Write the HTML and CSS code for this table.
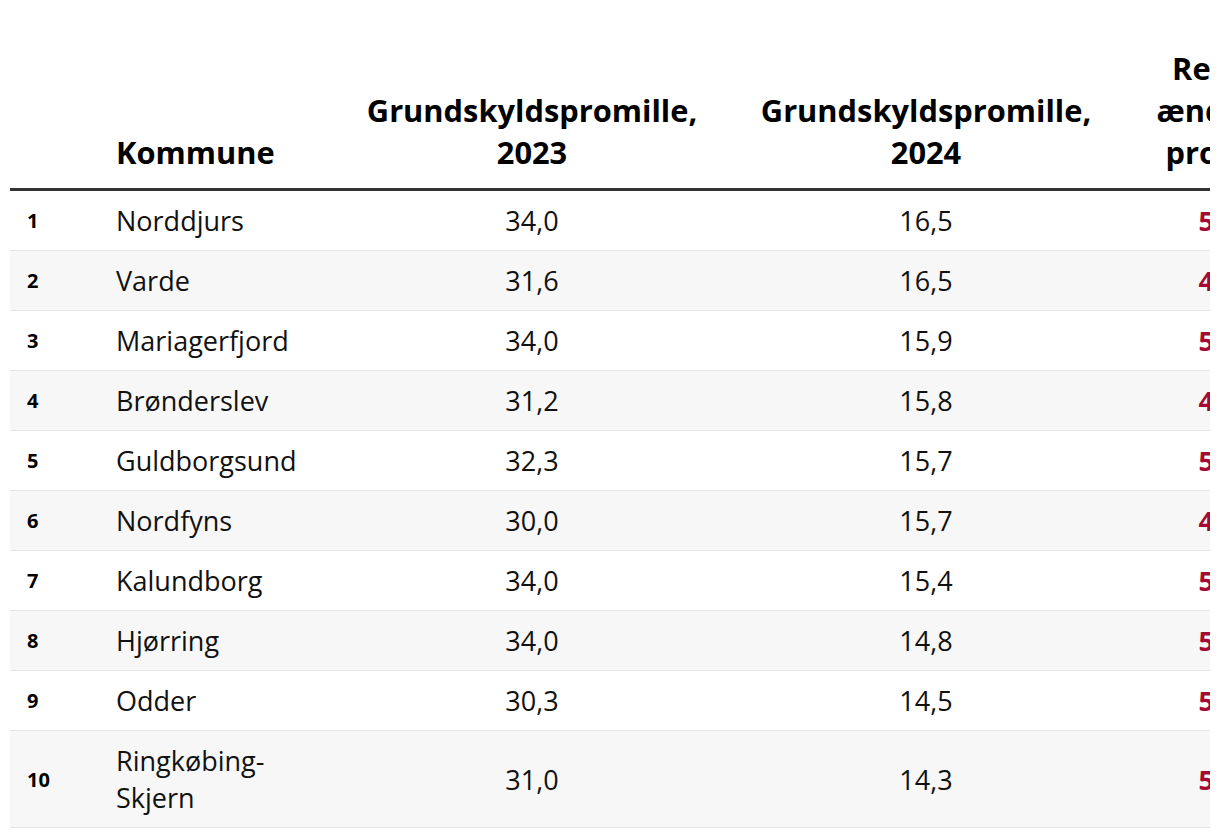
FILE: index.html
```html
<!DOCTYPE html>
<html lang="da">
<head>
<meta charset="utf-8">
<title>Grundskyldspromille</title>
<link rel="stylesheet" href="styles.css">
</head>
<body>
<div class="wrap">
  <table class="tbl">
    <colgroup>
      <col class="c-rank">
      <col class="c-name">
      <col class="c-num">
      <col class="c-num">
      <col class="c-rel">
    </colgroup>
    <thead>
      <tr>
        <th class="rank"></th>
        <th class="name">Kommune</th>
        <th class="num">Grundskyldspromille,<br>2023</th>
        <th class="num">Grundskyldspromille,<br>2024</th>
        <th class="num rel">Relativ<br>ændring,<br>procent</th>
      </tr>
    </thead>
    <tbody>
      <tr><td class="rank">1</td><td class="name">Norddjurs</td><td class="num">34,0</td><td class="num">16,5</td><td class="num red">51,5</td></tr>
      <tr><td class="rank">2</td><td class="name">Varde</td><td class="num">31,6</td><td class="num">16,5</td><td class="num red">47,8</td></tr>
      <tr><td class="rank">3</td><td class="name">Mariagerfjord</td><td class="num">34,0</td><td class="num">15,9</td><td class="num red">53,2</td></tr>
      <tr><td class="rank">4</td><td class="name">Brønderslev</td><td class="num">31,2</td><td class="num">15,8</td><td class="num red">49,4</td></tr>
      <tr><td class="rank">5</td><td class="name">Guldborgsund</td><td class="num">32,3</td><td class="num">15,7</td><td class="num red">51,4</td></tr>
      <tr><td class="rank">6</td><td class="name">Nordfyns</td><td class="num">30,0</td><td class="num">15,7</td><td class="num red">47,7</td></tr>
      <tr><td class="rank">7</td><td class="name">Kalundborg</td><td class="num">34,0</td><td class="num">15,4</td><td class="num red">54,7</td></tr>
      <tr><td class="rank">8</td><td class="name">Hjørring</td><td class="num">34,0</td><td class="num">14,8</td><td class="num red">56,5</td></tr>
      <tr><td class="rank">9</td><td class="name">Odder</td><td class="num">30,3</td><td class="num">14,5</td><td class="num red">52,1</td></tr>
      <tr><td class="rank">10</td><td class="name">Ringkøbing-<br>Skjern</td><td class="num">31,0</td><td class="num">14,3</td><td class="num red">53,9</td></tr>
    </tbody>
  </table>
</div>
</body>
</html>
```

FILE: styles.css
```css
html, body {
  margin: 0;
  padding: 0;
  background: #ffffff;
}

body {
  font-family: "Open Sans", "Noto Sans", sans-serif;
  color: #111111;
}

.wrap {
  margin: 0 10px;
  padding-top: 32px;
  overflow: hidden;
}

.tbl {
  border-collapse: collapse;
  table-layout: fixed;
  width: 1318px;
}

.c-rank { width: 90px; }
.c-name { width: 235px; }
.c-num { width: 394px; }
.c-rel { width: 205px; }

.tbl th {
  font-size: 30.8px;
  font-weight: 700;
  line-height: 42px;
  vertical-align: bottom;
  padding: 15px 0 15px 0;
  color: #000000;
  border-bottom: 3px solid #333333;
}

.tbl th.name {
  text-align: left;
  padding-left: 16px;
}

.tbl th.num {
  text-align: center;
}

.tbl td {
  font-size: 27px;
  line-height: 37px;
  padding: 11px 0;
  vertical-align: middle;
  border-bottom: 1px solid #e6e6e6;
}

.tbl tbody tr:nth-child(even) td {
  background: #f7f7f7;
}

.tbl td.rank {
  font-size: 20px;
  font-weight: 700;
  padding-left: 17px;
  color: #000000;
}

.tbl td.name {
  padding-left: 16px;
}

.tbl td.num {
  text-align: center;
}

.tbl td.red {
  color: #a50a33;
  font-weight: 700;
}
```
